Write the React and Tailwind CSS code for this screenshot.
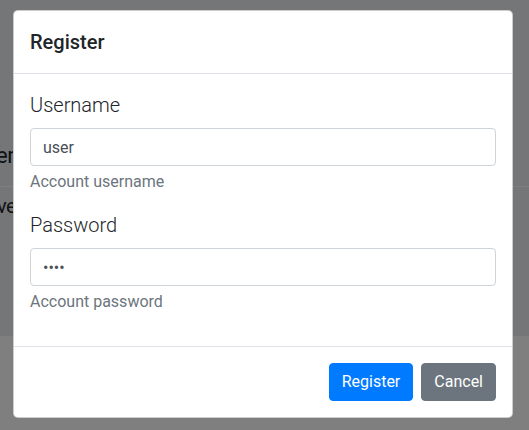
import React from "react";

const font = { fontFamily: "Roboto, 'Liberation Sans', sans-serif" };

const Field = ({ label, type, value, help }) => (
  <div className="mb-4">
    <label className="block mb-2 text-[20px] leading-[30px] font-light text-[#212529]">
      {label}
    </label>
    <input
      type={type}
      defaultValue={value}
      className="block w-full h-[38px] px-3 text-[16px] text-[#495057] bg-white border border-[#ced4da] rounded outline-none"
    />
    <small className="block mt-1 text-[16px] leading-6 text-[#6c757d]">{help}</small>
  </div>
);

export default function App() {
  return (
    <div className="relative h-[430px] overflow-hidden bg-white" style={font}>
      {/* page behind the modal */}
      <div className="h-[336px] bg-[#e9ecef] pt-[139px]">
        <div className="-ml-[4px] h-[47px] text-[22px] leading-[34px] tracking-[-0.5px] text-[#212529]">er</div>
        <div className="h-px bg-white" />
        <div className="-ml-[3px] pt-1 text-[20px] leading-[30px] tracking-[-0.5px] text-[#212529]">ve</div>
      </div>

      {/* backdrop */}
      <div className="absolute inset-0 bg-black/50" />

      {/* modal */}
      <div className="absolute left-[13px] top-[10px] w-[500px] bg-white border border-black/20 rounded-[5px]">
        <div className="p-4 border-b border-[#dee2e6]">
          <h5 className="text-[20px] leading-[30px] font-medium text-[#212529]">Register</h5>
        </div>

        <div className="p-4">
          <Field label="Username" type="text" value="user" help="Account username" />
          <Field label="Password" type="password" value="user" help="Account password" />
        </div>

        <div className="flex justify-end p-3 border-t border-[#dee2e6]">
          <button className="m-1 px-3 py-[6px] text-[16px] leading-6 text-white bg-[#007bff] border border-[#007bff] rounded">
            Register
          </button>
          <button className="m-1 px-3 py-[6px] text-[16px] leading-6 text-white bg-[#6c757d] border border-[#6c757d] rounded">
            Cancel
          </button>
        </div>
      </div>
    </div>
  );
}
